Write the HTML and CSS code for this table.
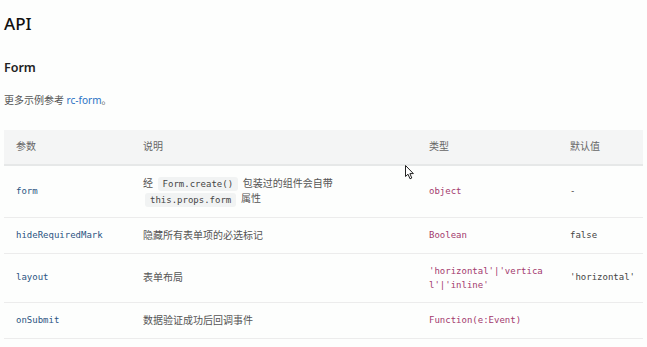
FILE: index.html
```html
<!DOCTYPE html>
<html lang="zh-CN">
<head>
    <meta charset="utf-8" />
    <title>API - Form</title>
    <link rel="stylesheet" href="styles.css">
</head>
<body>
<h1>API</h1>
<h2>Form</h2>
<p class="intro">更多示例参考 <a href="#">rc-form</a>。</p>

<table class="api-table">
    <colgroup>
        <col class="col-name">
        <col class="col-desc">
        <col class="col-type">
        <col class="col-default">
    </colgroup>
    <thead>
        <tr>
            <th>参数</th>
            <th>说明</th>
            <th>类型</th>
            <th>默认值</th>
        </tr>
    </thead>
    <tbody>
        <tr>
            <td class="prop">form</td>
            <td>经 <code>Form.create()</code> 包装过的组件会自带 <code>this.props.form</code> 属性</td>
            <td class="type">object</td>
            <td class="default">-</td>
        </tr>
        <tr>
            <td class="prop">hideRequiredMark</td>
            <td>隐藏所有表单项的必选标记</td>
            <td class="type">Boolean</td>
            <td class="default">false</td>
        </tr>
        <tr>
            <td class="prop">layout</td>
            <td>表单布局</td>
            <td class="type">'horizontal'|'vertical'|'inline'</td>
            <td class="default">'horizontal'</td>
        </tr>
        <tr>
            <td class="prop">onSubmit</td>
            <td>数据验证成功后回调事件</td>
            <td class="type">Function(e:Event)</td>
            <td class="default"></td>
        </tr>
    </tbody>
</table>

<!-- mouse pointer captured in the screenshot -->
<svg class="cursor" width="10" height="15" viewBox="0 0 10 15">
    <path d="M0.5 0.5 L0.5 11.5 L3 9.2 L5 13.8 L6.8 13 L4.9 8.6 L8.4 8.6 Z" fill="#fff" stroke="#222" stroke-width="1" stroke-linejoin="round"/>
</svg>
</body>
</html>
```

FILE: styles.css
```css
/* Page: white, docs-style text */
body {
    margin: 0;
    padding: 0 4px;
    background-color: #fdfefd;
    color: #555;
    font-family: "Noto Sans", "Noto Sans CJK SC", sans-serif;
    position: relative;
}
h1 {
    margin: 12px 0 0;
    font-size: 17px;
    line-height: 24px;
    font-weight: 500;
    color: #111;
}
h2 {
    margin: 23px 0 0;
    font-size: 12.5px;
    line-height: 18px;
    font-weight: 600;
    color: #222;
}
.intro {
    margin: 15px 0 0;
    font-size: 10px;
    line-height: 16px;
    color: #555;
}
.intro a {
    color: #2a72c4;
    text-decoration: none;
}
/* API table */
.api-table {
    margin-top: 22px;
    width: 639px;
    border-collapse: collapse;
    table-layout: fixed;
    font-size: 10px;
    line-height: 15px;
}
.col-name { width: 127px; }
.col-desc { width: 286px; }
.col-type { width: 141px; }
.col-default { width: 85px; }
.api-table th {
    text-align: left;
    font-weight: normal;
    color: #666;
    background-color: #f4f5f5;
    padding: 9px 12px 10px;
    border-bottom: 2px solid #e6e8e8;
}
.api-table td {
    padding: 10px 12px;
    border-bottom: 1px solid #ececec;
    color: #555;
    vertical-align: middle;
}
.api-table .prop,
.api-table .type,
.api-table .default,
.api-table code {
    font-family: "DejaVu Sans Mono", "Liberation Mono", monospace;
    font-size: 9px;
}
.api-table .prop,
.api-table .default {
    line-height: 15px;
}
.api-table .prop {
    color: #2b5482;
}
.api-table .type {
    color: #a33a6e;
    line-height: 14px;
    word-break: break-all;
}
.api-table .default {
    color: #444;
}
.api-table code {
    display: inline-block;
    line-height: 12px;
    color: #444;
    background-color: #f1f3f3;
    border-radius: 3px;
    padding: 1px 5px;
    margin: 0 2px;
    vertical-align: middle;
}
.cursor {
    position: absolute;
    left: 405px;
    top: 165px;
}
```
